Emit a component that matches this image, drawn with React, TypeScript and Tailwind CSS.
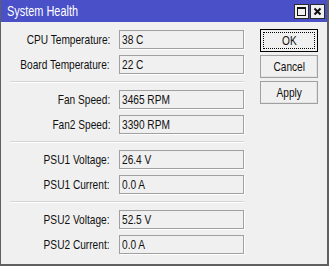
import React from "react";

const font = { fontFamily: '"Liberation Sans", Arial, sans-serif' };

type Row = { label: string; value: string };
const groups: Row[][] = [
  [
    { label: "CPU Temperature:", value: "38 C" },
    { label: "Board Temperature:", value: "22 C" },
  ],
  [
    { label: "Fan Speed:", value: "3465 RPM" },
    { label: "Fan2 Speed:", value: "3390 RPM" },
  ],
  [
    { label: "PSU1 Voltage:", value: "26.4 V" },
    { label: "PSU1 Current:", value: "0.0 A" },
  ],
  [
    { label: "PSU2 Voltage:", value: "52.5 V" },
    { label: "PSU2 Current:", value: "0.0 A" },
  ],
];

function Field({ label, value }: Row) {
  return (
    <div className="flex items-center h-[19px]">
      <div className="w-[100px] flex justify-end">
        <span className="inline-block whitespace-nowrap text-[13px] text-[#111] leading-none scale-x-[0.78] origin-right">
          {label}
        </span>
      </div>
      <div className="ml-[9px] w-[125px] h-[19px] border border-[#a0a0a0] shadow-[1px_1px_0_#ffffff] bg-[#f0f0f0] flex items-center pl-[2px]">
        <span className="inline-block whitespace-nowrap text-[13px] text-[#111] leading-none scale-x-[0.78] origin-left">
          {value}
        </span>
      </div>
    </div>
  );
}

function BtnText({ children }: { children: React.ReactNode }) {
  return (
    <span className="inline-block whitespace-nowrap text-[13px] text-[#111] leading-none scale-x-[0.78]">
      {children}
    </span>
  );
}

export default function App() {
  return (
    <div
      className="w-[329px] h-[266px] bg-[#f0f0f0] border-l border-r-2 border-b-2 border-[#606060] flex flex-col"
      style={font}
    >
      <div className="h-[22px] bg-[#4a50c8] flex items-center pl-[6px] pr-[2px] shrink-0">
        <div className="flex-1 flex">
          <span className="inline-block whitespace-nowrap text-white text-[14px] leading-none scale-x-[0.78] origin-left">
            System Health
          </span>
        </div>
        <div className="w-[15px] h-[15px] bg-[#f0f0f0] border border-[#2a2a2a] flex items-center justify-center">
          <div className="w-[9px] h-[9px] border border-[#111] border-t-2"></div>
        </div>
        <div className="ml-[1px] w-[15px] h-[15px] bg-[#f0f0f0] border border-[#2a2a2a] flex items-center justify-center">
          <svg width="9" height="9" viewBox="0 0 9 9">
            <path d="M1.5 1.5 L7.5 7.5 M7.5 1.5 L1.5 7.5" stroke="#111" strokeWidth="2" />
          </svg>
        </div>
      </div>
      <div className="flex items-start pl-[9px] pt-[7px]">
        <div className="flex flex-col mt-[1px] w-[234px]">
          {groups.map((g, gi) => (
            <React.Fragment key={gi}>
              {gi > 0 && (
                <div className="my-[7px] h-[2px] border-t border-[#d5d5d5] border-b border-b-[#ffffff]"></div>
              )}
              <div className="flex flex-col gap-[6px]">
                {g.map((r) => (
                  <Field key={r.label} {...r} />
                ))}
              </div>
            </React.Fragment>
          ))}
        </div>
        <div className="ml-[16px] flex flex-col gap-[3px]">
          <button className="w-[58px] h-[23px] border border-[#000] bg-[#f0f0f0] p-[2px] flex">
            <span className="flex-1 border border-dotted border-[#000] flex items-center justify-center">
              <BtnText>OK</BtnText>
            </span>
          </button>
          <button className="w-[58px] h-[23px] border border-[#a0a0a0] shadow-[inset_-1px_-1px_0_#e3e3e3] bg-[#f0f0f0] flex items-center justify-center">
            <BtnText>Cancel</BtnText>
          </button>
          <button className="w-[58px] h-[23px] border border-[#a0a0a0] shadow-[inset_-1px_-1px_0_#e3e3e3] bg-[#f0f0f0] flex items-center justify-center">
            <BtnText>Apply</BtnText>
          </button>
        </div>
      </div>
    </div>
  );
}
